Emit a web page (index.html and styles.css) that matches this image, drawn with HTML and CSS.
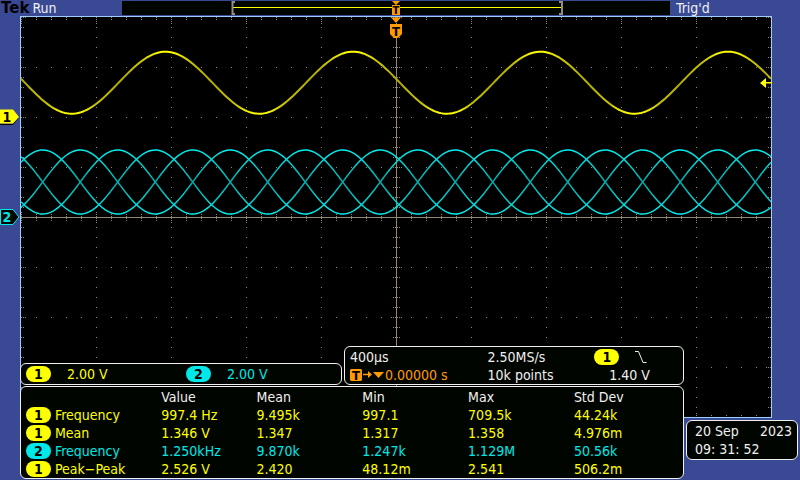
FILE: index.html
```html
<!DOCTYPE html>
<html lang="en">
<head>
    <meta charset="UTF-8">
    <meta name="viewport" content="width=device-width, initial-scale=1.0">
    <title>Oscilloscope</title>
    <link rel="stylesheet" href="styles.css">
</head>
<body>
 <div class="scope">

  <header class="top-bar">
   <div class="status"><span class="logo">Tek</span><span>Run</span></div>
   <svg class="record" viewBox="0 0 548 14" preserveAspectRatio="none" aria-hidden="true">
    <path d="M110 6.5H440" stroke="#ffff00"/>
    <path d="M113 1H110.5V13H113M437 1H440V13H437" stroke="#948c8c" stroke-width="2" fill="none"/>
   </svg>
   <div class="trig-state">Trig'd</div>
  </header>

  <div class="channel-tags">
   <svg class="tag tag1" viewBox="0 0 20 16">
    <path d="M0 15.5H13L18 9" stroke="#000" fill="none"/>
    <path d="M0 .5H13L19 8L13 14.5H0Z" fill="#ffff00"/>
    <text x="7" y="13" text-anchor="middle">1</text>
   </svg>
   <svg class="tag tag2" viewBox="0 0 20 16">
    <path d="M.5 .5H13L19 8L13 15.5H.5Z" fill="#000500" stroke="#00e8e8"/>
    <text x="7" y="13" text-anchor="middle">2</text>
   </svg>
  </div>

  <main class="plot">
   <svg class="graticule" viewBox="0 0 752 402" preserveAspectRatio="none">
    <defs>
     <linearGradient id="glow1" x1="0" y1="0" x2="0" y2="1">
      <stop offset="0" stop-color="#ffff00"/>
      <stop offset=".15" stop-color="#c8c400"/>
      <stop offset=".5" stop-color="#b0ac00"/>
      <stop offset=".85" stop-color="#c8c400"/>
      <stop offset="1" stop-color="#ffff00"/>
     </linearGradient>
     <linearGradient id="glow2" x1="0" y1="0" x2="0" y2="1">
      <stop offset="0" stop-color="#00f0f0"/>
      <stop offset=".5" stop-color="#00acac"/>
      <stop offset="1" stop-color="#00f0f0"/>
     </linearGradient>
    </defs>
    <g class="dots">
     <!-- division lines -->
     <path class="every15" d="M1 51.5H751M1 101.5H751M1 151.5H751M1 251.5H751M1 301.5H751M1 351.5H751"/>
     <path class="every10" d="M76.5 1V401M151.5 1V401M226.5 1V401M301.5 1V401M451.5 1V401M526.5 1V401M601.5 1V401M676.5 1V401"/>
     <!-- edge ticks -->
     <path class="every15" d="M1 1.5H751M1 3.5H751M1 399.5H751"/>
     <path class="every10" d="M1.5 1V401M3.5 1V401M748.5 1V401M750.5 1V401"/>
     <path class="every75" d="M1 5.5H751M1 7.5H751M1 397.5H751M1 196.5H751M1 206.5H751"/>
     <path class="every50" d="M5.5 1V401M746.5 1V401M371.5 1V401M381.5 1V401"/>
     <!-- centre axes -->
     <path class="every15" d="M1 198.5H751M1 200.5H751M1 202.5H751M1 204.5H751"/>
     <path class="every10" d="M373.5 1V401M375.5 1V401M377.5 1V401M379.5 1V401"/>
     <path d="M376.5 20V401M1 201.5H751"/>
    </g>
    <g id="traces"></g>
   </svg>
   <svg class="trigger-pos" viewBox="0 0 14 40">
    <path d="M3 1H11L7 5Z M3 5H11V15H3Z M2 17.5H12L7 23Z M1 24H13V34L9 38H5L1 34Z" fill="#ff9a00"/>
    <path d="M0 16.5H14" stroke="#9cceff"/>
    <text class="small-t" x="7" y="14" text-anchor="middle">T</text>
    <text class="big-t" x="7" y="36" text-anchor="middle">T</text>
   </svg>
   <svg class="trigger-level" viewBox="0 0 12 12">
    <path d="M0 6L6 1V11Z M5 5H12V6.5H5Z" fill="#ffff00"/>
   </svg>
  </main>

  <section class="readouts">
   <div class="panel channels">
    <div class="channel ch1"><span class="badge">1</span>2.00 V</div>
    <div class="channel ch2"><span class="badge">2</span>2.00 V</div>
   </div>

   <div class="panel timebase">
    <div>400µs</div>
    <div>2.50MS/s</div>
    <div class="slope ch1">
     <span class="badge">1</span>
     <svg width="12" height="14" viewBox="0 0 12 14"><path d="M0 1.5H3.5L8 12.5H11.5" stroke="#f0f0f0" fill="none"/></svg>
    </div>
    <div class="delay">
     <svg width="35" height="14" viewBox="0 0 35 14">
      <path d="M1 1H11L12 2V12L11 13H1L0 12V2Z" fill="#ff9a00"/>
      <path d="M13 6.5H20" stroke="#ff9a00" stroke-width="1.5"/>
      <path d="M18 3L22 6.5L18 10Z M23 4H34L28.5 10Z" fill="#ff9a00"/>
      <text x="6" y="12" text-anchor="middle">T</text>
     </svg>0.00000 s
    </div>
    <div>10k points</div>
    <div class="level">1.40 V</div>
   </div>

   <div class="panel measurements">
    <table>
     <colgroup><col class="col-name"><col class="col-value"><col class="col-stat"><col class="col-stat"><col class="col-stat"><col></colgroup>
     <tr><td></td><th>Value</th><th>Mean</th><th>Min</th><th>Max</th><th>Std Dev</th></tr>
     <tr class="ch1"><th><span class="badge">1</span>Frequency</th><td>997.4 Hz</td><td>9.495k</td><td>997.1</td><td>709.5k</td><td>44.24k</td></tr>
     <tr class="ch1"><th><span class="badge">1</span>Mean</th><td>1.346 V</td><td>1.347</td><td>1.317</td><td>1.358</td><td>4.976m</td></tr>
     <tr class="ch2"><th><span class="badge">2</span>Frequency</th><td>1.250kHz</td><td>9.870k</td><td>1.247k</td><td>1.129M</td><td>50.56k</td></tr>
     <tr class="ch1"><th><span class="badge">1</span>Peak−Peak</th><td>2.526 V</td><td>2.420</td><td>48.12m</td><td>2.541</td><td>506.2m</td></tr>
    </table>
   </div>

   <div class="panel clock">
    <div class="date"><span>20 Sep</span><span>2023</span></div>
    <div>09: 31: 52</div>
   </div>
  </section>
 </div>
 <script src="script.js"></script>
</body>
</html>
```
FILE: styles.css
```css
        * {
            box-sizing: border-box;
        }
        body {
            margin: 0;
            background-color: #3a4994;
            color: #f0f0f0;
            font-family: "DejaVu Sans Condensed", "DejaVu Sans", sans-serif;
            font-size: 14px;
            line-height: 18px;
        }
        .scope{
            min-height: 100vh;
            display: grid;
            grid-template-columns: 20px 1fr 28px;
            grid-template-rows: 16px 1fr 62px;
        }

        /* top bar */
        .top-bar{
            grid-area: 1 / 1 / 2 / 4;
            display: grid;
            grid-template-columns: 122fr 548fr 130fr;
            align-items: center;
            line-height: 16px;
        }
        .status{
            display: flex;
            gap: 3px;
            padding-left: 1px;
        }
        .logo{
            color: #000;
            font-family: "DejaVu Sans", sans-serif;
            font-weight: bold;
            font-size: 15px;
        }
        .record{
            width: 100%;
            height: 14px;
            background-color: #000500;
        }
        .trig-state{padding-left: 6px}

        /* channel ground tags */
        .channel-tags{
            grid-area: 2 / 1 / 3 / 2;
            position: relative;
        }
        .tag{
            position: absolute;
            left: 0;
            width: 20px;
            height: 16px;
            transform: translateY(-50%);
            font-weight: bold;
            font-size: 14px;
        }
        .tag1{top: 25%}
        .tag2{top: 50%; fill: #00e8e8}

        /* plot */
        .plot{
            grid-area: 2 / 2 / 3 / 3;
            position: relative;
            background-color: #000;
            border: 1px solid #9cceff;
        }
        .graticule{
            position: absolute;
            top: -1px;
            left: -1px;
            width: calc(100% + 2px);
            height: calc(100% + 2px);
        }
        .dots{
            fill: none;
            stroke: #94866b;
            shape-rendering: crispEdges;
        }
        .every10{stroke-dasharray: 1 9}
        .every15{stroke-dasharray: 1 14}
        .every50{stroke-dasharray: 1 49}
        .every75{stroke-dasharray: 1 74}
        .trace1{
            fill: none;
            stroke: url(#glow1);
            stroke-width: 2;
        }
        .trace2{
            fill: none;
            stroke: url(#glow2);
            stroke-width: 1.5;
        }
        .trigger-pos{
            position: absolute;
            top: -17px;
            left: 50%;
            width: 14px;
            height: 40px;
            transform: translateX(-50%);
            font-weight: bold;
        }
        .small-t{font-size: 11px}
        .big-t{font-size: 13px}
        .trigger-level{
            position: absolute;
            top: 15%;
            right: -1px;
            width: 12px;
            height: 12px;
        }

        /* readouts over the lower part of the plot */
        .readouts{
            grid-area: 2 / 2 / 4 / 4;
            align-self: end;
            z-index: 1;
            display: grid;
            grid-template-columns: 322fr 340fr 112fr;
            gap: 1px 2px;
            padding: 0 2px 1px 0;
        }
        .panel{
            background-color: #000500;
            border: 1px solid #f0f0f0;
            border-radius: 6px;
        }
        .ch1{color: #ffff00}
        .ch2{color: #00e8e8}
        .badge{
            display: inline-block;
            width: 25px;
            height: 16px;
            border-radius: 8px;
            line-height: 16px;
            text-align: center;
            font-weight: bold;
            color: #000;
            background-color: #ffff00;
        }
        .ch2 .badge{background-color: #00e8e8}
        .channels{
            align-self: end;
            display: grid;
            grid-template-columns: 160fr 155fr;
            padding: 1px 0 1px 5px;
        }
        .channel{
            display: flex;
            align-items: center;
            gap: 16px;
        }
        .timebase{
            display: grid;
            grid-template-columns: 138fr 107fr 89fr;
            padding: 1px 0 0 5px;
        }
        .slope{
            display: flex;
            align-items: center;
            gap: 16px;
        }
        .delay{
            display: flex;
            align-items: center;
            color: #ff9a00;
        }
        .delay text{
            font-size: 13px;
            font-weight: bold;
        }
        .level{padding-left: 15px}
        .measurements{
            grid-column: 1 / 3;
            padding: 1px 0 0 5px;
        }
        table{
            width: 100%;
            table-layout: fixed;
            border-collapse: collapse;
        }
        th, td{
            height: 18px;
            padding: 0;
            text-align: left;
            font-weight: normal;
            white-space: nowrap;
        }
        th .badge{
            margin-right: 4px;
            vertical-align: top;
            margin-top: 1px;
        }
        .col-name{width: 20.6%}
        .col-value{width: 14.5%}
        .col-stat{width: 16.1%}
        .clock{
            align-self: start;
            margin-top: 34px;
            padding: 1px 5px 1px 8px;
        }
        .date{
            display: flex;
            justify-content: space-between;
        }
```
FILE: script.js
```js
const traces = document.getElementById('traces');

// cosine trace: mid line, amplitude, period and x of one peak
function drawTrace(name, mid, amp, period, peak) {
    let d = '';
    for (let x = 1; x <= 751; x += 2) {
        const y = mid - amp * Math.cos(2 * Math.PI * (x - peak) / period);
        d += (d ? 'L' : 'M') + x + ' ' + y.toFixed(2);
    }
    const path = document.createElementNS('http://www.w3.org/2000/svg', 'path');
    path.setAttribute('class', name);
    path.setAttribute('d', d);
    traces.appendChild(path);
}

[0, 1, 2, 3].forEach(i => drawTrace('trace2', 166, 32, 150, 22.7 + i * 37.5));
drawTrace('trace1', 66.7, 31, 187.5, 145.5);
```
